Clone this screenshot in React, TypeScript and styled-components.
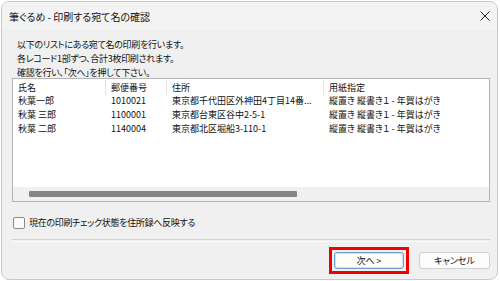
import React from "react";
import styled, { createGlobalStyle } from "styled-components";

const GlobalStyle = createGlobalStyle`
  html, body {
    margin: 0;
    padding: 0;
    background: #ffffff;
  }
  body {
    font-family: "Noto Sans CJK JP", "Noto Sans", sans-serif;
    font-feature-settings: "palt";
    color: #111111;
  }
`;

const Window = styled.div`
  box-sizing: border-box;
  width: 497px;
  height: 279px;
  margin: 1px 0 0 1px;
  border: 1px solid #c9c9c9;
  border-radius: 8px;
  background: #f0f0f0;
  display: flex;
  flex-direction: column;
  overflow: hidden;
`;

const TitleBar = styled.div`
  height: 28px;
  display: flex;
  align-items: center;
  justify-content: space-between;
  padding: 0 6px 0 7px;
  font-size: 10px;
  background: #f3f3f3;
`;

const CloseIcon = () => (
  <svg width="12" height="12" viewBox="0 0 12 12">
    <path d="M1.5 1.5 L10.5 10.5 M10.5 1.5 L1.5 10.5" stroke="#222" strokeWidth="1" />
  </svg>
);

const Body = styled.div`
  flex: 1;
  display: flex;
  flex-direction: column;
  padding: 8px 7px 0 10px;
`;

const Message = styled.div`
  padding-left: 5px;
  font-size: 9px;
  line-height: 14px;
  letter-spacing: -0.3px;
`;

const ListBox = styled.div`
  box-sizing: border-box;
  height: 124px;
  margin-top: -2px;
  border: 1px solid #b4b4b4;
  background: #ffffff;
  display: flex;
  flex-direction: column;
`;

const Grid = styled.div`
  flex: 1;
  display: grid;
  grid-template-columns: 93px 61px 157px 1fr;
  grid-auto-rows: 14px;
  align-content: start;
  padding-top: 1px;
  font-size: 9px;
`;

const HeadCell = styled.div<{ $last?: boolean }>`
  height: 15px;
  line-height: 15px;
  padding-left: 5px;
  border-right: ${(p) => (p.$last ? "none" : "1px solid #e4e4e4")};
  white-space: nowrap;
  overflow: hidden;
`;

const Cell = styled.div`
  line-height: 14px;
  padding-left: 5px;
  white-space: nowrap;
  overflow: hidden;
`;

const ScrollTrack = styled.div`
  height: 14px;
  background: #f0f0f0;
  display: flex;
  align-items: center;
  padding-left: 16px;
`;

const ScrollThumb = styled.div`
  width: 268px;
  height: 6px;
  border-radius: 1px;
  background: #858585;
`;

const CheckRow = styled.label`
  display: flex;
  align-items: center;
  gap: 4px;
  margin-top: 14px;
  margin-left: 1px;
  font-size: 9px;
  letter-spacing: -0.3px;
  height: 13px;
`;

const CheckBox = styled.span`
  box-sizing: border-box;
  width: 12px;
  height: 12px;
  border: 1px solid #8a8a8a;
  border-radius: 2px;
  background: #fbfbfb;
`;

const Separator = styled.div`
  margin-top: 10px;
  height: 1px;
  border-top: 1px solid #d2d2d2;
  border-bottom: 1px solid #fafafa;
`;

const ButtonRow = styled.div`
  display: flex;
  justify-content: flex-end;
  align-items: center;
  gap: 10px;
  margin-top: 5px;
`;

const Highlight = styled.div`
  border: 3px solid #f00000;
  padding: 2px;
  display: flex;
`;

const Button = styled.button<{ $primary?: boolean }>`
  box-sizing: border-box;
  width: ${(p) => (p.$primary ? "70px" : "71px")};
  height: 17px;
  padding: 0;
  font-family: inherit;
  font-feature-settings: "palt";
  font-size: 9px;
  color: #111111;
  background: #fdfdfd;
  border: 1px solid ${(p) => (p.$primary ? "#6f9dd0" : "#d0d0d0")};
  box-shadow: ${(p) => (p.$primary ? "inset 0 0 0 1px #cfe0f3" : "none")};
  border-radius: 3px;
`;

const rows = [
  ["秋葉一郎", "1010021", "東京都千代田区外神田4丁目14番...", "縦置き 縦書き１ - 年賀はがき"],
  ["秋葉 三郎", "1100001", "東京都台東区谷中2-5-1", "縦置き 縦書き１ - 年賀はがき"],
  ["秋葉 二郎", "1140004", "東京都北区堀船3-110-1", "縦置き 縦書き１ - 年賀はがき"],
];

const headers = ["氏名", "郵便番号", "住所", "用紙指定"];

export default function App() {
  return (
    <>
      <GlobalStyle />
      <Window>
        <TitleBar>
          <span>筆ぐるめ - 印刷する宛て名の確認</span>
          <CloseIcon />
        </TitleBar>
        <Body>
          <Message>
            <div>以下のリストにある宛て名の印刷を行います。</div>
            <div>各レコード1部ずつ、合計3枚印刷されます。</div>
            <div>確認を行い、「次へ」を押して下さい。</div>
          </Message>
          <ListBox>
            <Grid>
              {headers.map((h, i) => (
                <HeadCell key={h} $last={i === headers.length - 1}>
                  {h}
                </HeadCell>
              ))}
              {rows.map((r) =>
                r.map((c, i) => <Cell key={r[0] + i}>{c}</Cell>)
              )}
            </Grid>
            <ScrollTrack>
              <ScrollThumb />
            </ScrollTrack>
          </ListBox>
          <CheckRow>
            <CheckBox />
            <span>現在の印刷チェック状態を住所録へ反映する</span>
          </CheckRow>
          <Separator />
          <ButtonRow>
            <Highlight>
              <Button $primary>次へ &gt;</Button>
            </Highlight>
            <Button>キャンセル</Button>
          </ButtonRow>
        </Body>
      </Window>
    </>
  );
}
